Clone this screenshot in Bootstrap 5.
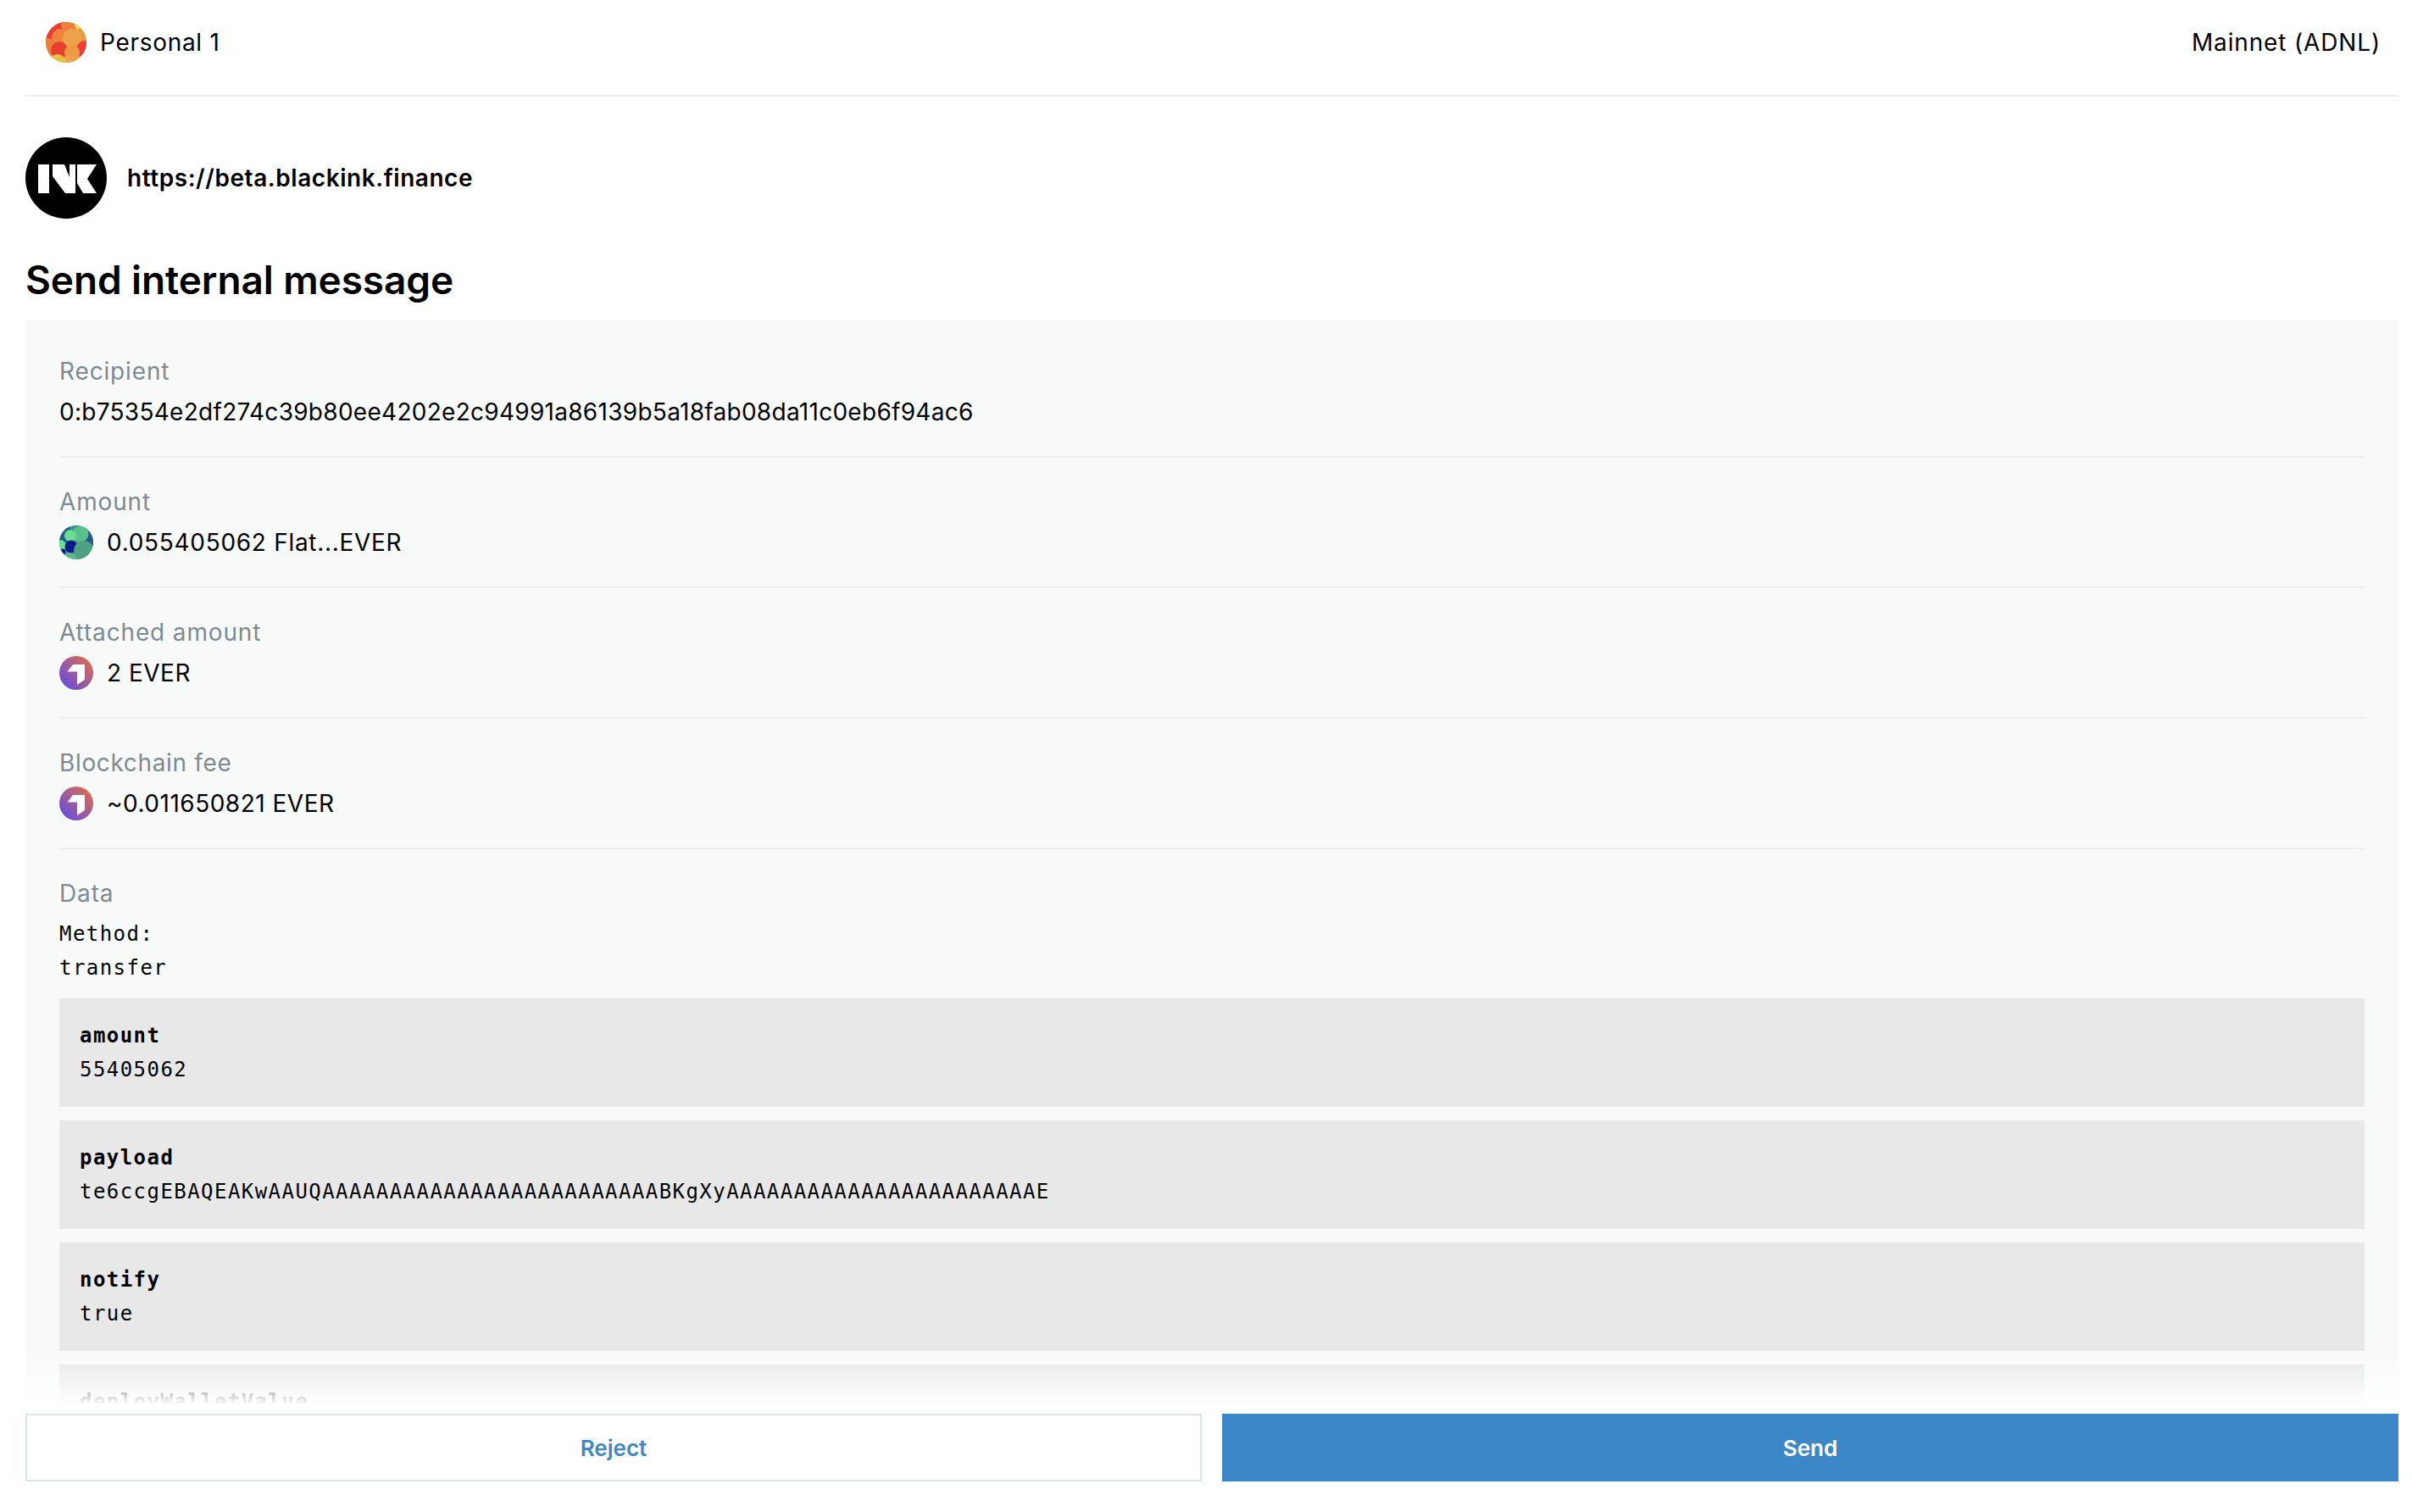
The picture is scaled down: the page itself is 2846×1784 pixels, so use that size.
<!DOCTYPE html>
<html lang="en">
<head>
<meta charset="utf-8">
<title>Send internal message</title>
<link href="https://cdn.jsdelivr.net/npm/bootstrap@5.3.0/dist/css/bootstrap.min.css" rel="stylesheet">
<style>
html,body{height:100%;}
body{font-family:Inter,"Liberation Sans",sans-serif;color:#000;background:#fff;font-size:28px;}
.shell{height:1784px;padding:0 16px 36px 30px;overflow:hidden;}
.topbar{height:114px;padding:0 21px 12px 24px;border-bottom:2px solid #eeeeee;letter-spacing:.7px;flex:none;}
.net-name{letter-spacing:.85px;}
.origin{height:96px;margin-top:48px;gap:24px;flex:none;}
.origin-url{font-weight:600;font-size:28px;letter-spacing:.55px;}
.sheet-title{font-size:46px;font-weight:600;line-height:60px;margin:42px 0 17px;letter-spacing:-.1px;flex:none;}
.sheet{background:#f8faf9;padding:9px 40px 0;flex:1 1 0;min-height:0;overflow:hidden;position:relative;}
.sheet-fade{position:absolute;left:0;right:0;bottom:0;height:70px;background:linear-gradient(to bottom,rgba(255,255,255,0),#fff 85%);}
.field{padding:32px 0;border-bottom:2px solid #eef0f0;}
.field:last-of-type{border-bottom:0;}
.field-label{color:#7d8a94;line-height:40px;margin-bottom:8px;letter-spacing:.85px;}
.fee-label{letter-spacing:.65px;}
.field-value{line-height:40px;letter-spacing:.5px;gap:16px;}
.hash-value{letter-spacing:.28px;}
.amount-value{letter-spacing:.7px;}
.mono-text{font-family:"DejaVu Sans Mono","Liberation Mono",monospace;font-size:24px;line-height:40px;letter-spacing:1.45px;}
.param{background:#e8e8e8;padding:24px;margin-top:16px;}
.actions{gap:24px;flex:none;}
.act{flex:1 1 0;height:80px;border-radius:0;font-size:26px;font-weight:600;display:flex;align-items:center;justify-content:center;padding:0;}
.act-reject{background:#fff;color:#3c87c8;border:2px solid #d8e6f3;}
.act-send{background:#3c87c8;color:#fff;border:2px solid #3c87c8;}
.act-send:hover{background:#3c87c8;color:#fff;border-color:#3c87c8;}
.act-reject:hover{background:#fff;color:#3c87c8;border-color:#d8e6f3;}
</style>
</head>
<body>
<div class="shell d-flex flex-column">
  <header class="topbar d-flex align-items-center justify-content-between">
    <div class="d-flex align-items-center gap-3">
      <svg width="48" height="48" viewBox="0 0 48 48"><defs><clipPath id="cp1"><circle cx="24" cy="24" r="24"/></clipPath></defs><g clip-path="url(#cp1)"><rect width="48" height="48" fill="#f08a3c"/><circle cx="10" cy="8" r="15" fill="#ea3f35"/><circle cx="30" cy="3" r="12" fill="#ee7f3e"/><circle cx="42" cy="3" r="8" fill="#f6d84a"/><circle cx="44" cy="18" r="11" fill="#ee9a45"/><circle cx="17" cy="18" r="10" fill="#f0843c"/><circle cx="31" cy="19" r="11" fill="#eda349"/><circle cx="2" cy="32" r="13" fill="#e5823b"/><circle cx="16" cy="33" r="10" fill="#e8402f"/><circle cx="46" cy="32" r="10" fill="#eb3f35"/><circle cx="31" cy="36" r="9" fill="#ee9a45"/><circle cx="30" cy="50" r="11" fill="#eda349"/><circle cx="14" cy="48" r="10" fill="#e8c048"/></g></svg>
      <span>Personal 1</span>
    </div>
    <span class="net-name">Mainnet (ADNL)</span>
  </header>
  <div class="origin d-flex align-items-center">
    <svg width="96" height="96" viewBox="0 0 96 96"><circle cx="48" cy="48" r="48" fill="#000"/><g fill="#fff"><rect x="15" y="32" width="13" height="34"/><polygon points="32,32 46,32 52,47 52,32 59,32 59,66 47,66 32,46"/><polygon points="61,32 84,32 73,49 84,66 68,66 61,54"/></g></svg>
    <span class="origin-url">https://beta.blackink.finance</span>
  </div>
  <h1 class="sheet-title">Send internal message</h1>
  <main class="sheet">
    <section class="field">
      <div class="field-label">Recipient</div>
      <div class="field-value hash-value">0:b75354e2df274c39b80ee4202e2c94991a86139b5a18fab08da11c0eb6f94ac6</div>
    </section>
    <section class="field">
      <div class="field-label">Amount</div>
      <div class="field-value d-flex align-items-center">
        <svg width="40" height="40" viewBox="0 0 40 40"><defs><clipPath id="cp2"><circle cx="20" cy="20" r="20"/></clipPath></defs><g clip-path="url(#cp2)"><rect width="40" height="40" fill="#4fa183"/><circle cx="20" cy="0" r="14" fill="#3a8f8a"/><circle cx="4" cy="10" r="11" fill="#26598c"/><circle cx="37" cy="15" r="9" fill="#26598c"/><circle cx="25" cy="10" r="9.5" fill="#5bbf8b"/><circle cx="13" cy="12" r="7" fill="#68de8e"/><circle cx="1" cy="24" r="7" fill="#68de8e"/><circle cx="14" cy="25" r="7.5" fill="#0a1a8a"/><circle cx="4" cy="31" r="3.5" fill="#0a1a8a"/><circle cx="12" cy="41" r="9" fill="#5bbd8a"/><circle cx="29" cy="30" r="12" fill="#4fa183"/></g></svg>
        <span class="amount-value">0.055405062 Flat...EVER</span>
      </div>
    </section>
    <section class="field">
      <div class="field-label">Attached amount</div>
      <div class="field-value d-flex align-items-center">
        <svg width="40" height="40" viewBox="0 0 40 40"><defs><linearGradient id="ev1" x1="0.15" y1="0.85" x2="0.85" y2="0.15"><stop offset="0" stop-color="#6a4fd6"/><stop offset="1" stop-color="#d66a5a"/></linearGradient></defs><circle cx="20" cy="20" r="20" fill="url(#ev1)"/><polygon points="16,10 30,10 30,28 21,34 21,18.5 9.5,18.5" fill="#fff"/></svg>
        <span>2 EVER</span>
      </div>
    </section>
    <section class="field">
      <div class="field-label fee-label">Blockchain fee</div>
      <div class="field-value d-flex align-items-center">
        <svg width="40" height="40" viewBox="0 0 40 40"><circle cx="20" cy="20" r="20" fill="url(#ev1)"/><polygon points="16,10 30,10 30,28 21,34 21,18.5 9.5,18.5" fill="#fff"/></svg>
        <span>~0.011650821 EVER</span>
      </div>
    </section>
    <section class="field">
      <div class="field-label">Data</div>
      <div class="mono-text">Method:</div>
      <div class="mono-text">transfer</div>
      <div class="param mono-text"><div class="fw-bold">amount</div><div>55405062</div></div>
      <div class="param mono-text"><div class="fw-bold">payload</div><div>te6ccgEBAQEAKwAAUQAAAAAAAAAAAAAAAAAAAAAAAAABKgXyAAAAAAAAAAAAAAAAAAAAAAAE</div></div>
      <div class="param mono-text"><div class="fw-bold">notify</div><div>true</div></div>
      <div class="param mono-text"><div class="fw-bold">deployWalletValue</div><div>100000000</div></div>
    </section>
    <div class="sheet-fade"></div>
  </main>
  <footer class="actions d-flex">
    <button type="button" class="btn act act-reject">Reject</button>
    <button type="button" class="btn act act-send">Send</button>
  </footer>
</div>
<script src="https://cdn.jsdelivr.net/npm/bootstrap@5.3.0/dist/js/bootstrap.bundle.min.js"></script>
</body>
</html>
